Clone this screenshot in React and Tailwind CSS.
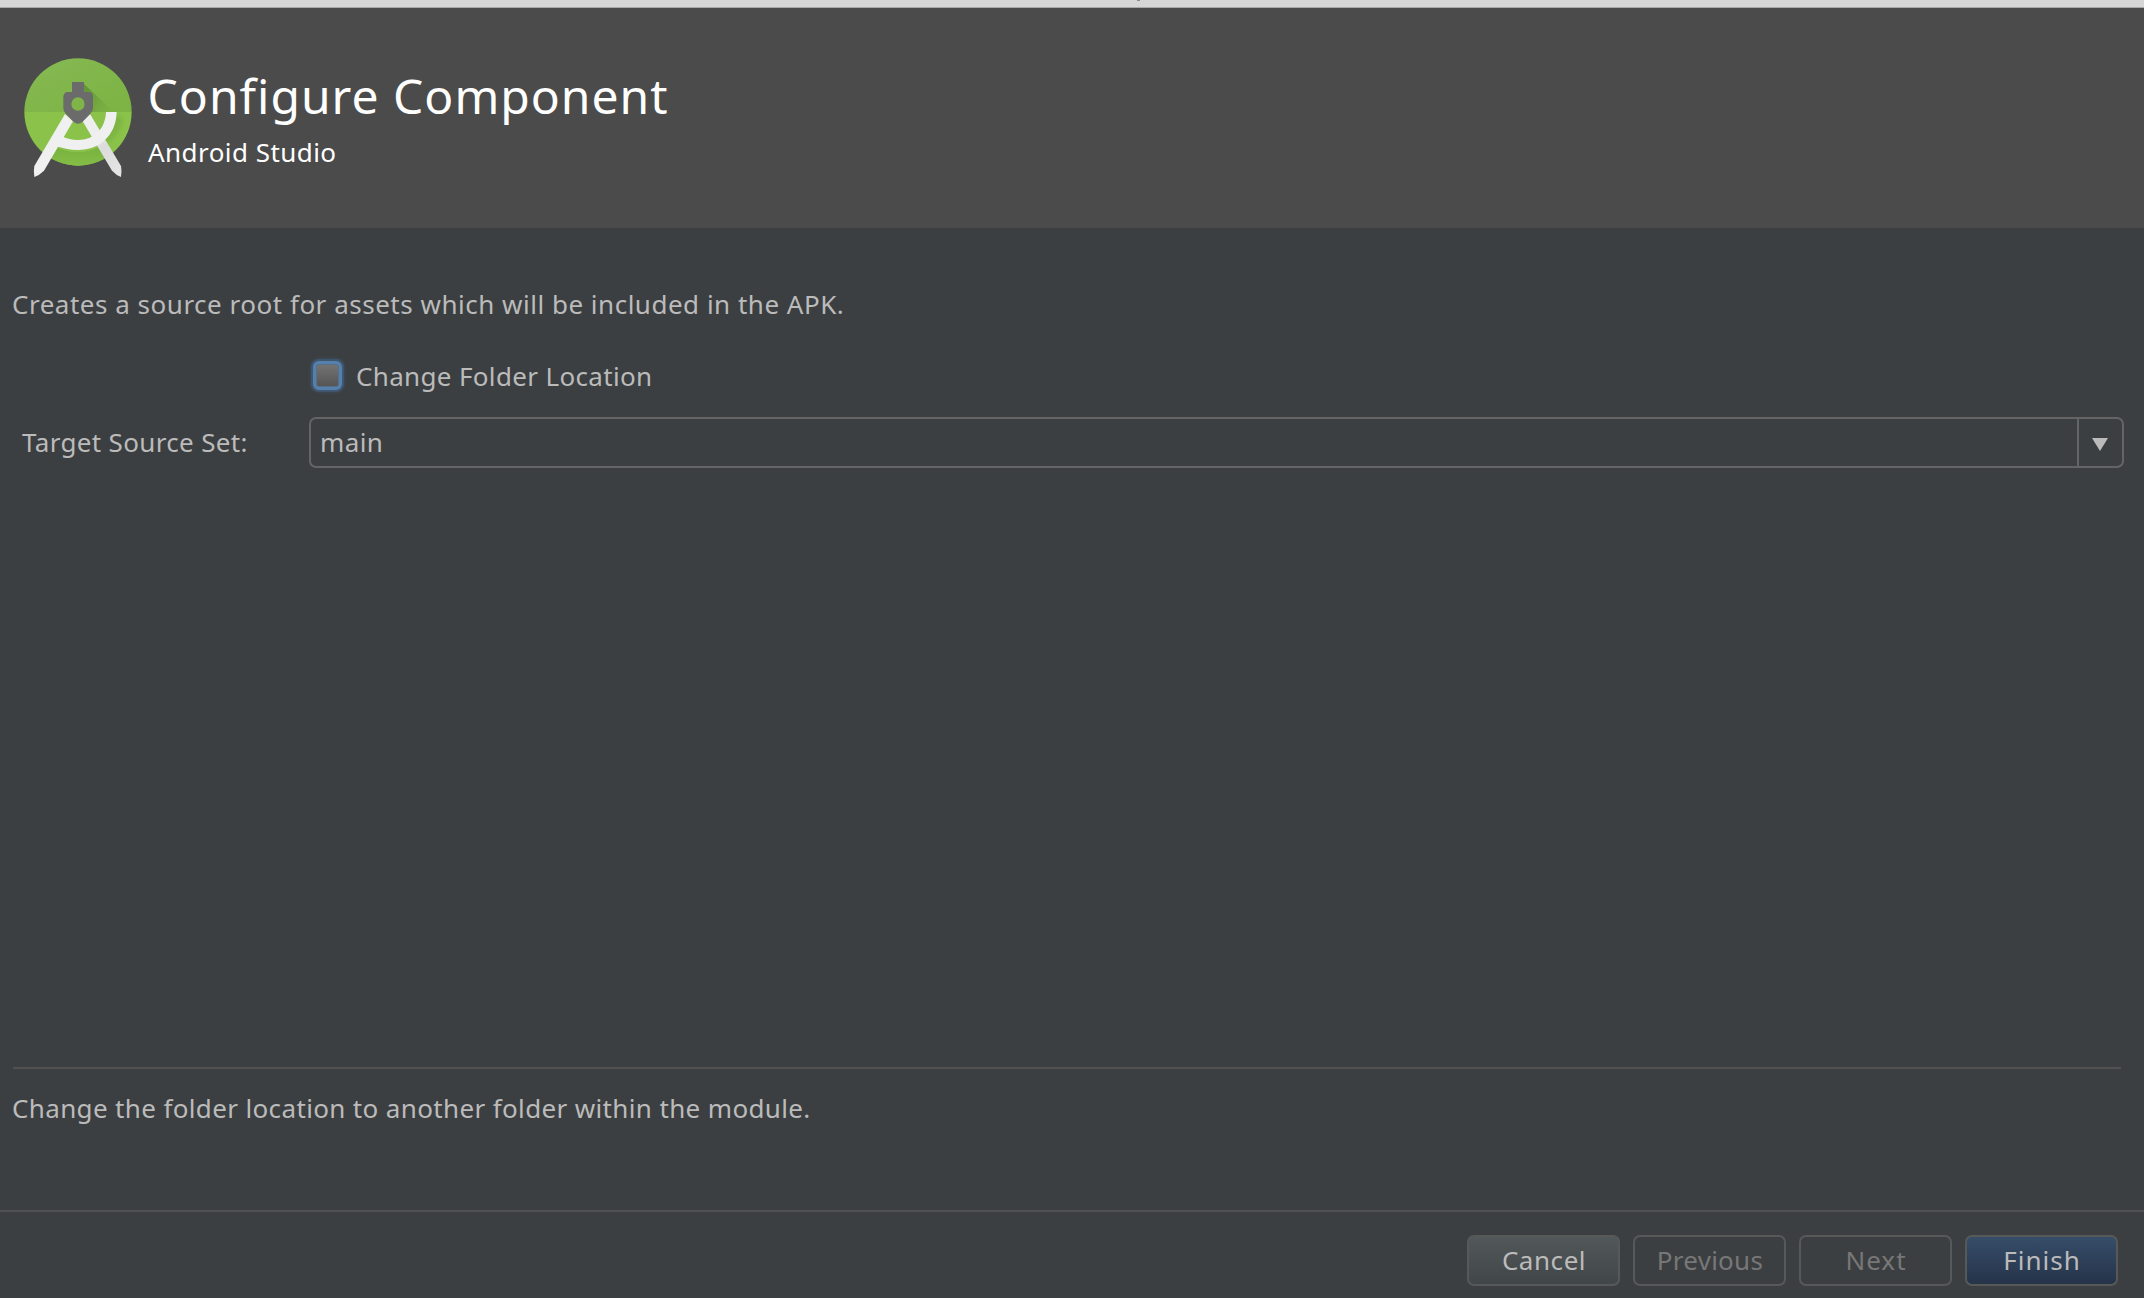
function StudioLogo() {
  return (
    <svg viewBox="0 0 420 450" className="h-[150px] w-[140px] shrink-0" aria-hidden="true">
      <defs>
        <clipPath id="disc"><circle cx="204" cy="216" r="161" /></clipPath>
        <linearGradient id="top" x1="0" y1="0" x2="1" y2="1">
          <stop offset="0" stopColor="#86b954" />
          <stop offset="1" stopColor="#7cb342" />
        </linearGradient>
        <linearGradient id="shade" gradientUnits="userSpaceOnUse" x1="225" y1="150" x2="310" y2="215">
          <stop offset="0" stopColor="#5d8f33" stopOpacity="0.85" />
          <stop offset="1" stopColor="#6ba03a" stopOpacity="0" />
        </linearGradient>
        <linearGradient id="low" gradientUnits="userSpaceOnUse" x1="0" y1="290" x2="0" y2="378">
          <stop offset="0" stopColor="#6fa83a" />
          <stop offset="1" stopColor="#82bd45" />
        </linearGradient>
        <linearGradient id="leg" gradientUnits="userSpaceOnUse" x1="240" y1="300" x2="330" y2="400">
          <stop offset="0" stopColor="#eeeeee" />
          <stop offset="0.3" stopColor="#dcdcdc" />
          <stop offset="1" stopColor="#e4e4e4" />
        </linearGradient>
        <filter id="soft"><feGaussianBlur stdDeviation="6" /></filter>
      </defs>
      <g clipPath="url(#disc)">
        <rect x="40" y="50" width="330" height="166" fill="url(#top)" />
        <rect x="40" y="216" width="330" height="170" fill="#8bc34a" />
        <path d="M222 132 L312 216 H225Z" fill="url(#shade)" />
        <path d="M137 322 Q206 352 276 318 L310 380 H112Z" fill="url(#low)" opacity="0.85" />
        <path d="M320 220 L340 240 Q330 290 288 312 L270 300Z" fill="#6fa53a" opacity="0.45" filter="url(#soft)" />
      </g>
      <path d="M240 222 L333 378 Q336 393 333 411 Q318 405 306 392 L218 244Z" fill="url(#leg)" />
      <path d="M165 222 L73 378 Q70 393 73 411 Q89 405 102 392 L189 244Z" fill="#f0f0f0" />
      <path d="M288 216 H320 C318 287 268 330 204 330 C178 330 158 325 137 318 L153 287 Q178 300 204 300 C253 300 286 266 288 216Z" fill="#f0f0f0" />
      <path
        fillRule="evenodd"
        d="M186 126 H222 V156 H238 Q249 158 249 171 V205 Q248 214 241 221 L217 246 Q204 256 191 246 L167 221 Q160 214 160 205 V171 Q161 158 171 156 H186Z M204 172 A20 20 0 1 0 204 212 A20 20 0 1 0 204 172Z"
        fill="#6b6b6b"
      />
    </svg>
  );
}

function Button({ children, className }) {
  return (
    <button className={`flex h-[51px] w-[153px] items-center justify-center rounded-[7px] border-2 border-[#575858] pb-px pl-px leading-9 ${className}`}>
      {children}
    </button>
  );
}

export default function App() {
  return (
    <div className="flex h-[1298px] w-[2144px] flex-col overflow-hidden bg-[#3c3f41] font-['Noto_Sans',sans-serif] text-[26px] leading-9 text-[#bbbbbb]">
      <div className="flex h-2 shrink-0 border-b border-[#a9a9a9] bg-[#d6d6d6] pl-[1137px]">
        <span className="h-px w-[3px] bg-[#8c8c8c]" />
      </div>

      <header className="flex h-[220px] shrink-0 bg-[#4b4b4b] pl-[10px] pt-8 text-white">
        <StudioLogo />
        <div className="flex flex-col gap-[6px] pt-6">
          <h1 className="-ml-[2.5px] text-[48px] leading-[64px] tracking-[1px]">Configure Component</h1>
          <p className="-ml-[2px] tracking-[0.45px]">Android Studio</p>
        </div>
      </header>

      <main className="flex flex-1 flex-col pt-[58px]">
        <p className="pl-3 tracking-[0.51px]">Creates a source root for assets which will be included in the APK.</p>

        <label className="mt-9 flex items-start pl-[313px]">
          <span className="mt-[3px] flex size-[29px] rounded-[6px] border-[3px] border-[#5480ad] bg-[#5a6f85] p-px shadow-[0_0_0_2px_rgba(70,105,145,0.45),0_0_3px_3px_rgba(60,90,125,0.4)]">
            <span className="flex-1 rounded-[2px] bg-linear-to-b from-[#737373] to-[#555555]" />
          </span>
          <span className="ml-[14px] tracking-[0.34px]">Change Folder Location</span>
        </label>

        <div className="mt-[23px] flex h-[51px] items-center pr-5">
          <span className="w-[309px] pb-px pl-[22px] tracking-[0.34px]">Target Source Set:</span>
          <div className="flex h-full flex-1 items-stretch rounded-[7px] border-2 border-[#646464]">
            <span className="flex-1 pl-[9px] pt-[5px] tracking-[0.4px]">main</span>
            <span className="flex w-[45px] items-center justify-center border-l-2 border-[#646464]">
              <svg viewBox="0 0 16 13" className="ml-[-2px] mt-[3px] h-[13px] w-4" aria-hidden="true">
                <path d="M0 0H16L8 13Z" fill="#bbbbbb" />
              </svg>
            </span>
          </div>
        </div>
      </main>

      <section className="h-[143px] shrink-0">
        <div className="ml-[13px] mr-[23px] h-0.5 bg-[#515151]" />
        <p className="mt-[21px] pl-3 tracking-[0.36px]">Change the folder location to another folder within the module.</p>
      </section>

      <footer className="flex h-[88px] shrink-0 justify-end gap-[13px] border-t-2 border-[#515151] pr-[26px] pt-[23px]">
        <Button className="bg-linear-to-b from-[#525759] to-[#414648] tracking-[0.55px]">Cancel</Button>
        <Button className="tracking-[0.25px] text-[#777777]">Previous</Button>
        <Button className="tracking-[1px] text-[#777777]">Next</Button>
        <Button className="bg-linear-to-b from-[#364d69] to-[#253449] tracking-[1px]">Finish</Button>
      </footer>
    </div>
  );
}
